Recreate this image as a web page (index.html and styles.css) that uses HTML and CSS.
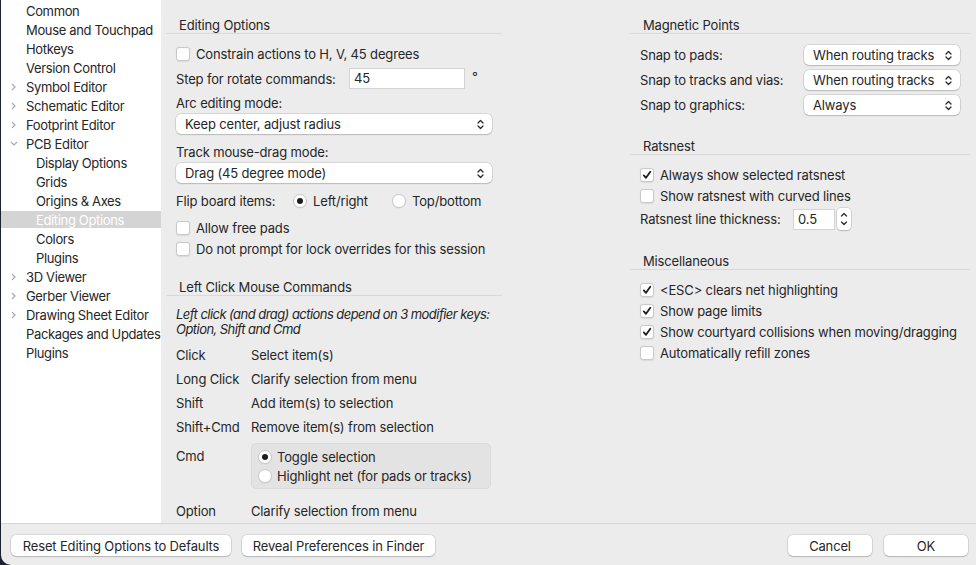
FILE: index.html
```html
<!DOCTYPE html>
<html>
<head>
<meta charset="utf-8">
<link rel="stylesheet" href="styles.css">
</head>
<body>
<div class="window">
  <div class="content">
    <nav class="sidebar">
      <div class="nav-item"><span class="twisty"></span>Common</div>
      <div class="nav-item"><span class="twisty"></span>Mouse and Touchpad</div>
      <div class="nav-item"><span class="twisty"></span>Hotkeys</div>
      <div class="nav-item"><span class="twisty"></span>Version Control</div>
      <div class="nav-item"><span class="twisty"><svg class="chev-r" viewBox="0 0 5 8"><path d="M1 1 L4 4 L1 7"/></svg></span>Symbol Editor</div>
      <div class="nav-item"><span class="twisty"><svg class="chev-r" viewBox="0 0 5 8"><path d="M1 1 L4 4 L1 7"/></svg></span>Schematic Editor</div>
      <div class="nav-item"><span class="twisty"><svg class="chev-r" viewBox="0 0 5 8"><path d="M1 1 L4 4 L1 7"/></svg></span>Footprint Editor</div>
      <div class="nav-item"><span class="twisty"><svg class="chev-d" viewBox="0 0 8 5"><path d="M1 1 L4 4 L7 1"/></svg></span>PCB Editor</div>
      <div class="nav-item child"><span class="twisty"></span>Display Options</div>
      <div class="nav-item child"><span class="twisty"></span>Grids</div>
      <div class="nav-item child"><span class="twisty"></span>Origins &amp; Axes</div>
      <div class="nav-item child selected"><span class="twisty"></span>Editing Options</div>
      <div class="nav-item child"><span class="twisty"></span>Colors</div>
      <div class="nav-item child"><span class="twisty"></span>Plugins</div>
      <div class="nav-item"><span class="twisty"><svg class="chev-r" viewBox="0 0 5 8"><path d="M1 1 L4 4 L1 7"/></svg></span>3D Viewer</div>
      <div class="nav-item"><span class="twisty"><svg class="chev-r" viewBox="0 0 5 8"><path d="M1 1 L4 4 L1 7"/></svg></span>Gerber Viewer</div>
      <div class="nav-item"><span class="twisty"><svg class="chev-r" viewBox="0 0 5 8"><path d="M1 1 L4 4 L1 7"/></svg></span>Drawing Sheet Editor</div>
      <div class="nav-item"><span class="twisty"></span>Packages and Updates</div>
      <div class="nav-item"><span class="twisty"></span>Plugins</div>
    </nav>

    <main class="panel">
      <section class="col">
        <div class="sec-title">Editing Options</div>
        <div class="sec-body">
          <label class="check first"><span class="box"></span>Constrain actions to H, V, 45 degrees</label>
          <div class="step-row">
            <span class="step-label">Step for rotate commands:</span>
            <span class="textfield wide">45</span>
            <span class="deg">°</span>
          </div>
          <div class="caption arc-cap">Arc editing mode:</div>
          <div class="select"><span>Keep center, adjust radius</span><svg class="updown" viewBox="0 0 7 11"><path d="M1 4 L3.5 1.5 L6 4 M1 7 L3.5 9.5 L6 7"/></svg></div>
          <div class="caption track-cap">Track mouse-drag mode:</div>
          <div class="select"><span>Drag (45 degree mode)</span><svg class="updown" viewBox="0 0 7 11"><path d="M1 4 L3.5 1.5 L6 4 M1 7 L3.5 9.5 L6 7"/></svg></div>
          <div class="flip-row">
            <span class="flip-label">Flip board items:</span>
            <label class="radio flip-opt"><span class="dot on"></span>Left/right</label>
            <label class="radio"><span class="dot"></span>Top/bottom</label>
          </div>
          <label class="check after-flip"><span class="box"></span>Allow free pads</label>
          <label class="check"><span class="box"></span>Do not prompt for lock overrides for this session</label>
        </div>

        <div class="sec-title second">Left Click Mouse Commands</div>
        <div class="sec-body">
          <p class="note">Left click (and drag) actions depend on 3 modifier keys:<br>Option, Shift and Cmd</p>
          <div class="cmd-grid">
            <span class="cmd-key">Click</span><span class="cmd-val">Select item(s)</span>
            <span class="cmd-key">Long Click</span><span class="cmd-val">Clarify selection from menu</span>
            <span class="cmd-key">Shift</span><span class="cmd-val">Add item(s) to selection</span>
            <span class="cmd-key">Shift+Cmd</span><span class="cmd-val">Remove item(s) from selection</span>
            <span class="cmd-key cmd-top">Cmd</span>
            <div class="rgroup">
              <label class="radio grp"><span class="dot on"></span>Toggle selection</label>
              <label class="radio grp"><span class="dot"></span>Highlight net (for pads or tracks)</label>
            </div>
            <span class="cmd-key opt">Option</span><span class="cmd-val opt">Clarify selection from menu</span>
          </div>
        </div>
      </section>

      <section class="col">
        <div class="sec-title">Magnetic Points</div>
        <div class="sec-body">
          <div class="field-row first-field">
            <span class="field-label">Snap to pads:</span>
            <div class="select narrow"><span>When routing tracks</span><svg class="updown" viewBox="0 0 7 11"><path d="M1 4 L3.5 1.5 L6 4 M1 7 L3.5 9.5 L6 7"/></svg></div>
          </div>
          <div class="field-row">
            <span class="field-label">Snap to tracks and vias:</span>
            <div class="select narrow"><span>When routing tracks</span><svg class="updown" viewBox="0 0 7 11"><path d="M1 4 L3.5 1.5 L6 4 M1 7 L3.5 9.5 L6 7"/></svg></div>
          </div>
          <div class="field-row">
            <span class="field-label">Snap to graphics:</span>
            <div class="select narrow"><span>Always</span><svg class="updown" viewBox="0 0 7 11"><path d="M1 4 L3.5 1.5 L6 4 M1 7 L3.5 9.5 L6 7"/></svg></div>
          </div>
        </div>

        <div class="sec-title third">Ratsnest</div>
        <div class="sec-body">
          <label class="check first-r"><span class="box on"><svg viewBox="0 0 10 10"><path d="M1.8 5.4 L4 7.8 L8.3 1.8"/></svg></span>Always show selected ratsnest</label>
          <label class="check"><span class="box"></span>Show ratsnest with curved lines</label>
          <div class="thick-row">
            <span class="thick-label">Ratsnest line thickness:</span>
            <span class="textfield small">0.5</span>
            <span class="stepper"><svg viewBox="0 0 14 22"><path d="M4.5 8 L7 5.5 L9.5 8 M4.5 14 L7 16.5 L9.5 14"/></svg></span>
          </div>
        </div>

        <div class="sec-title fourth">Miscellaneous</div>
        <div class="sec-body">
          <label class="check first-r"><span class="box on"><svg viewBox="0 0 10 10"><path d="M1.8 5.4 L4 7.8 L8.3 1.8"/></svg></span>&lt;ESC&gt; clears net highlighting</label>
          <label class="check"><span class="box on"><svg viewBox="0 0 10 10"><path d="M1.8 5.4 L4 7.8 L8.3 1.8"/></svg></span>Show page limits</label>
          <label class="check"><span class="box on"><svg viewBox="0 0 10 10"><path d="M1.8 5.4 L4 7.8 L8.3 1.8"/></svg></span>Show courtyard collisions when moving/dragging</label>
          <label class="check"><span class="box"></span>Automatically refill zones</label>
        </div>
      </section>
    </main>
  </div>

  <footer class="footer">
    <button class="btn reset">Reset Editing Options to Defaults</button>
    <button class="btn reveal">Reveal Preferences in Finder</button>
    <span class="spacer"></span>
    <button class="btn dlg">Cancel</button>
    <button class="btn dlg">OK</button>
  </footer>
</div>
</body>
</html>
```

FILE: styles.css
```css
html, body {
  margin: 0;
  padding: 0;
  height: 100%;
  overflow: hidden;
}

body {
  background: #1c2231;
  font-family: Inter, "Liberation Sans", "DejaVu Sans", sans-serif;
  font-size: 13px;
  letter-spacing: -0.15px;
  color: #262626;
}

.window {
  margin-left: 1px;
  height: 565px;
  background: #ececec;
  border-bottom-left-radius: 10px;
  display: flex;
  flex-direction: column;
  overflow: hidden;
}

.content {
  display: flex;
  height: 523px;
  flex: none;
}

/* Sidebar */
.sidebar {
  width: 160px;
  flex: none;
  background: #ffffff;
  padding-top: 1px;
  box-sizing: border-box;
  letter-spacing: -0.35px;
}

.nav-item {
  height: 19px;
  display: flex;
  align-items: center;
  white-space: nowrap;
  box-sizing: border-box;
}

.nav-item.child {
  padding-left: 10px;
}

.nav-item.selected {
  background: #d4d4d4;
  background-clip: padding-box;
  border-top: 1px solid transparent;
  border-bottom: 1px solid transparent;
  color: #ffffff;
}

.twisty {
  width: 25px;
  flex: none;
  padding-left: 9px;
  box-sizing: border-box;
  display: flex;
  align-items: center;
}

.chev-r {
  width: 5px;
  height: 8px;
  margin-left: 1px;
}

.chev-d {
  width: 8px;
  height: 5px;
}

.chev-r path, .chev-d path {
  fill: none;
  stroke: #a9a9a9;
  stroke-width: 1.2;
}

/* Panel */
.panel {
  flex: 1;
  display: flex;
  padding-left: 5px;
  gap: 128px;
  overflow: hidden;
}

.col {
  flex: none;
}

.col:first-child {
  width: 336px;
}

.col:last-child {
  width: 340px;
}

.sec-title {
  margin-top: 17px;
  padding-left: 13px;
  line-height: 16px;
  height: 16px;
  border-bottom: 1px solid #d9d9d9;
}

.sec-title.second {
  margin-top: 20px;
}

.sec-title.third,
.sec-title.fourth {
  margin-top: 23px;
}

.sec-body {
  padding: 0 10px;
}

/* Checkbox */
.check {
  display: flex;
  align-items: center;
  height: 21px;
  gap: 6px;
  white-space: nowrap;
}

.check.first {
  margin-top: 9px;
}

.check.first-r {
  margin-top: 9px;
}

.check.after-flip {
  margin-top: 7px;
}

.box {
  width: 14px;
  height: 14px;
  box-sizing: border-box;
  flex: none;
  background: #ffffff;
  border: 1px solid #c9c9c9;
  border-radius: 3px;
  box-shadow: 0 0.5px 1px rgba(0, 0, 0, 0.08);
  display: flex;
  align-items: center;
  justify-content: center;
}

.box svg {
  width: 10px;
  height: 10px;
}

.box svg path {
  fill: none;
  stroke: #1e1e1e;
  stroke-width: 1.8;
  stroke-linecap: round;
  stroke-linejoin: round;
}

/* Radio */
.radio {
  display: flex;
  align-items: center;
  gap: 6px;
  white-space: nowrap;
}

.dot {
  width: 14px;
  height: 14px;
  box-sizing: border-box;
  flex: none;
  border-radius: 50%;
  background: #ffffff;
  border: 1px solid #c9c9c9;
  box-shadow: 0 0.5px 1px rgba(0, 0, 0, 0.08);
  display: flex;
  align-items: center;
  justify-content: center;
}

.dot.on::after {
  content: "";
  width: 6px;
  height: 6px;
  border-radius: 50%;
  background: #1e1e1e;
}

/* Rows */
.step-row {
  display: flex;
  align-items: center;
  height: 21px;
  margin-top: 4px;
}

.step-label {
  width: 173px;
  flex: none;
  white-space: nowrap;
}

.textfield {
  height: 21px;
  box-sizing: border-box;
  background: #ffffff;
  border: 1px solid #d3d3d3;
  padding-left: 4px;
  line-height: 19px;
  flex: none;
}

.textfield.wide {
  width: 116px;
}

.textfield.small {
  width: 42px;
  height: 21px;
}

.deg {
  margin-left: 7px;
  margin-top: -4px;
}

.caption {
  line-height: 16px;
  height: 16px;
  white-space: nowrap;
}

.arc-cap {
  margin-top: 6px;
  margin-bottom: 3px;
}

.track-cap {
  margin-top: 10px;
  margin-bottom: 3px;
}

.select {
  height: 20px;
  background: #ffffff;
  border-radius: 5px;
  box-shadow: 0 0 0 0.5px rgba(0, 0, 0, 0.18), 0 1px 1.5px rgba(0, 0, 0, 0.14);
  display: flex;
  align-items: center;
  justify-content: space-between;
  padding: 0 8px 0 9px;
  white-space: nowrap;
}

.select.narrow {
  width: 156px;
  box-sizing: border-box;
  flex: none;
}

.updown {
  width: 7px;
  height: 11px;
  flex: none;
}

.updown path {
  fill: none;
  stroke: #2a2a2a;
  stroke-width: 1.3;
  stroke-linecap: round;
  stroke-linejoin: round;
}

.flip-row {
  display: flex;
  align-items: center;
  height: 18px;
  margin-top: 9px;
}

.flip-label {
  width: 117px;
  flex: none;
  white-space: nowrap;
}

.flip-opt {
  width: 99px;
  flex: none;
}

/* Notes and command grid */
.note {
  margin: 11px 0 0 0;
  font-style: italic;
  letter-spacing: -0.55px;
  line-height: 15px;
  white-space: nowrap;
}

.cmd-grid {
  display: grid;
  grid-template-columns: 75px 240px;
  margin-top: 6px;
}

.cmd-key,
.cmd-val {
  height: 24px;
  line-height: 24px;
  white-space: nowrap;
}

.cmd-key.cmd-top {
  margin-top: 4px;
  padding-top: 5px;
  height: 16px;
  line-height: 16px;
}

.rgroup {
  margin-top: 4px;
  background: #e3e3e3;
  border: 1px solid #dadada;
  border-radius: 5px;
  padding: 3px 6px;
  height: 46px;
  box-sizing: border-box;
  display: flex;
  flex-direction: column;
}

.radio.grp {
  height: 19px;
  gap: 5px;
}

.cmd-key.opt,
.cmd-val.opt {
  margin-top: 10px;
}

/* Right column */
.field-row {
  display: flex;
  align-items: center;
  height: 20px;
  margin-top: 5px;
}

.field-row.first-field {
  margin-top: 11px;
}

.field-label {
  flex: 1;
  white-space: nowrap;
}

.thick-row {
  display: flex;
  align-items: center;
  height: 22px;
  margin-top: 2px;
}

.thick-label {
  width: 153px;
  flex: none;
  white-space: nowrap;
}

.stepper {
  margin-left: 2px;
  width: 14px;
  height: 22px;
  flex: none;
  background: #ffffff;
  border-radius: 4px;
  box-shadow: 0 0 0 0.5px rgba(0, 0, 0, 0.18), 0 1px 1.5px rgba(0, 0, 0, 0.14);
  display: flex;
}

.stepper svg {
  width: 14px;
  height: 22px;
}

.stepper path {
  fill: none;
  stroke: #2a2a2a;
  stroke-width: 1.3;
  stroke-linecap: round;
  stroke-linejoin: round;
}

/* Footer */
.footer {
  flex: 1;
  border-top: 1px solid #d6d6d6;
  display: flex;
  align-items: flex-start;
  padding: 11px 8px 0 10px;
  gap: 11px;
}

.spacer {
  flex: 1;
}

.btn {
  height: 21px;
  margin: 0;
  padding: 0;
  border: none;
  background: #ffffff;
  border-radius: 5px;
  box-shadow: 0 0 0 0.5px rgba(0, 0, 0, 0.16), 0 1px 1.5px rgba(0, 0, 0, 0.16);
  font-family: inherit;
  font-size: 13px;
  letter-spacing: -0.15px;
  color: #262626;
  white-space: nowrap;
  text-align: center;
}

.btn.reset {
  width: 220px;
}

.btn.reveal {
  width: 193px;
}

.btn.dlg {
  width: 84px;
}

.btn.dlg + .btn.dlg {
  margin-left: 1px;
}
```
